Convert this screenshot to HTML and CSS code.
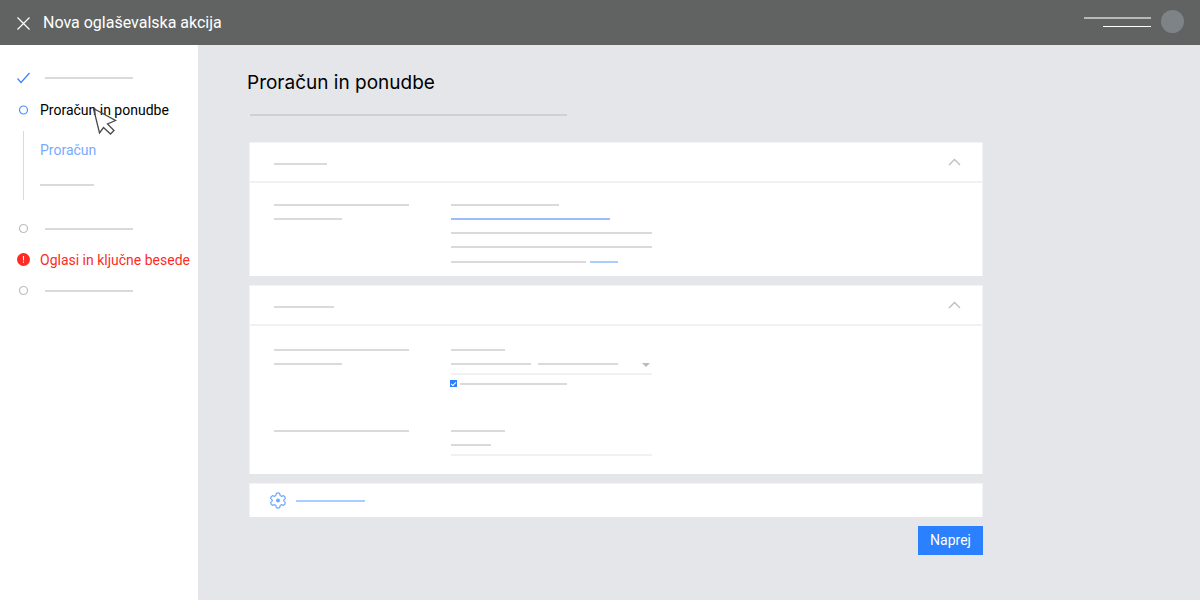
FILE: index.html
```html
<!DOCTYPE html>
<html lang="sl">
<head>
    <meta charset="UTF-8">
    <meta name="viewport" content="width=device-width, initial-scale=1.0">
    <title>Nova oglaševalska akcija</title>
    <link rel="stylesheet" href="styles.css">
</head>
<body>
    <header class="topbar">
        <button class="close-btn" type="button" aria-label="Zapri">
            <svg width="13" height="13" viewBox="0 0 13 13" fill="none" stroke="currentColor" stroke-width="1.2">
                <path d="M0.5 0.5L12.5 12.5M12.5 0.5L0.5 12.5"/>
            </svg>
        </button>
        <div class="topbar-title">Nova oglaševalska akcija</div>
        <div class="account">
            <span class="account-name"></span>
            <span class="account-mail"></span>
        </div>
        <span class="avatar"></span>
    </header>

    <div class="layout">
        <nav class="sidebar">
            <div class="step">
                <svg class="step-icon" width="13" height="13" viewBox="0 0 13 13" fill="none" stroke="#4285f4" stroke-width="1.3">
                    <path d="M0.5 6.5L4 10.5L12.5 1"/>
                </svg>
                <span class="bar step-bar"></span>
            </div>
            <div class="step">
                <svg class="step-icon" width="13" height="13" viewBox="0 0 13 13" fill="none" stroke="#4d90fe" stroke-width="1.2">
                    <circle cx="6.5" cy="6" r="4"/>
                </svg>
                <a class="step-link" href="#">Proračun in ponudbe</a>
                <svg class="cursor" width="26" height="30" viewBox="0 0 26 30" fill="none" stroke="#4a4a4a" stroke-width="1.3">
                    <path d="M1.5 1.5L7.5 26L11.5 20.5L18.5 27L22 23.5L15.5 17L23.5 13.5Z"/>
                </svg>
            </div>
            <div class="substeps">
                <a class="substep-link" href="#">Proračun</a>
                <span class="bar w-54"></span>
            </div>
            <div class="step next">
                <svg class="step-icon" width="13" height="13" viewBox="0 0 13 13" fill="none" stroke="#bdbdc2" stroke-width="1.2">
                    <circle cx="6.5" cy="6.5" r="4"/>
                </svg>
                <span class="bar step-bar"></span>
            </div>
            <div class="step next">
                <svg class="step-icon" width="13" height="13" viewBox="0 0 13 13">
                    <circle cx="6.5" cy="6.5" r="6.5" fill="#fb2c25"/>
                    <path d="M6.5 3V7.6M6.5 8.6V9.8" stroke="#fff" stroke-width="1.1"/>
                </svg>
                <a class="step-link error" href="#">Oglasi in ključne besede</a>
            </div>
            <div class="step next">
                <svg class="step-icon" width="13" height="13" viewBox="0 0 13 13" fill="none" stroke="#bdbdc2" stroke-width="1.2">
                    <circle cx="6.5" cy="6.5" r="4"/>
                </svg>
                <span class="bar step-bar"></span>
            </div>
        </nav>

        <main class="content">
            <h1>Proračun in ponudbe</h1>

            <div class="panels">
                <span class="bar intro-bar"></span>

                <section class="card">
                    <div class="card-header">
                        <span class="bar w-53"></span>
                        <button class="toggle-btn" type="button" aria-label="Strni">
                            <svg width="13" height="8" viewBox="0 0 13 8" fill="none" stroke="#bdbdbd" stroke-width="1.3">
                                <path d="M1 7L6.5 1.5L12 7"/>
                            </svg>
                        </button>
                    </div>
                    <div class="card-body goals">
                        <div class="lines">
                            <span class="bar w-135"></span>
                            <span class="bar w-68"></span>
                        </div>
                        <div class="lines">
                            <span class="bar w-108"></span>
                            <a class="bar link-strong w-159" href="#" aria-label="Cilj"></a>
                            <span class="bar w-201"></span>
                            <span class="bar w-201"></span>
                            <div class="line-end">
                                <span class="bar w-135"></span>
                                <a class="bar link w-28" href="#" aria-label="Več o tem"></a>
                            </div>
                        </div>
                    </div>
                </section>

                <section class="card">
                    <div class="card-header">
                        <span class="bar w-60"></span>
                        <button class="toggle-btn" type="button" aria-label="Strni">
                            <svg width="13" height="8" viewBox="0 0 13 8" fill="none" stroke="#bdbdbd" stroke-width="1.3">
                                <path d="M1 7L6.5 1.5L12 7"/>
                            </svg>
                        </button>
                    </div>
                    <div class="card-body budget">
                        <div class="lines">
                            <span class="bar w-135"></span>
                            <span class="bar w-68"></span>
                        </div>
                        <div>
                            <div class="lines">
                                <label class="bar w-54" for="strategy" aria-label="Strategija"></label>
                                <div class="field">
                                    <select id="strategy"><option></option></select>
                                    <div class="field-value">
                                        <span class="bar w-80"></span>
                                        <span class="bar w-80"></span>
                                        <svg class="arrow" width="8" height="4" viewBox="0 0 8 4"><path d="M0 0H8L4 4Z" fill="#b9b9c0"/></svg>
                                    </div>
                                </div>
                            </div>
                            <div class="check-row">
                                <input type="checkbox" id="limit" checked>
                                <label class="bar w-107" for="limit" aria-label="Omejitev"></label>
                            </div>
                        </div>

                        <div class="lines">
                            <span class="bar w-135"></span>
                        </div>
                        <div class="lines">
                            <label class="bar w-54" for="amount" aria-label="Znesek"></label>
                            <div class="field">
                                <input type="text" id="amount">
                                <div class="field-value">
                                    <span class="bar w-40"></span>
                                </div>
                            </div>
                        </div>
                    </div>
                </section>

                <section class="card settings">
                    <svg width="16" height="17" viewBox="0 0 16 17" fill="none" stroke="#6aa9ff" stroke-width="1.2">
                        <path d="M6.3 1.5Q8 0.3 9.7 1.5L10.2 3.6L11.4 4.3L13.6 3.7Q15.4 4.6 15.3 6.6L13.7 8.1V8.9L15.3 10.4Q15.4 12.4 13.6 13.3L11.4 12.7L10.2 13.4L9.7 15.5Q8 16.7 6.3 15.5L5.8 13.4L4.6 12.7L2.4 13.3Q0.6 12.4 0.7 10.4L2.3 8.9V8.1L0.7 6.6Q0.6 4.6 2.4 3.7L4.6 4.3L5.8 3.6Z" stroke-linejoin="round"/>
                        <circle cx="8" cy="8.5" r="2" fill="#6aa9ff" stroke="none"/>
                    </svg>
                    <a class="bar link w-69" href="#" aria-label="Nastavitve"></a>
                </section>

                <button class="next-btn" type="button">Naprej</button>
            </div>
        </main>
    </div>
</body>
</html>
```

FILE: styles.css
```css
* {
    box-sizing: border-box;
}

body {
    margin: 0;
    min-height: 100vh;
    display: flex;
    flex-direction: column;
    font-family: Roboto, "Liberation Sans", sans-serif;
    font-size: 14px;
    background: #e5e6ea;
}

button {
    font-family: inherit;
    border: none;
    padding: 0;
    background: none;
    cursor: pointer;
}

a {
    text-decoration: none;
}

svg {
    display: block;
    flex-shrink: 0;
}

/* top bar */
.topbar {
    display: flex;
    align-items: center;
    height: 45px;
    padding: 0 16px 2px 17px;
    background: #616362;
    color: #fff;
}

.close-btn {
    color: #fff;
    padding-top: 4px;
}

.topbar-title {
    flex: 1;
    margin-left: 13px;
    padding-top: 2px;
    font-size: 16px;
}

.account {
    display: flex;
    flex-direction: column;
    align-items: flex-end;
    gap: 7px;
    margin-right: 10px;
}

.account-name {
    width: 67px;
    height: 2px;
    background: #b7b9b8;
}

.account-mail {
    width: 48px;
    height: 1px;
    background: #fff;
}

.avatar {
    width: 23px;
    height: 23px;
    border-radius: 50%;
    background: #7e8387;
}

.layout {
    flex: 1;
    display: flex;
}

/* placeholder lines */
.bar {
    display: block;
    height: 2px;
    background: #dadade;
}

.bar.link {
    background: #a9cdff;
}

.bar.link-strong {
    background: #9dbcfa;
}

.w-28 { width: 28px; }
.w-40 { width: 40px; }
.w-53 { width: 53px; }
.w-54 { width: 54px; }
.w-60 { width: 60px; }
.w-68 { width: 68px; }
.w-69 { width: 69px; }
.w-80 { width: 80px; }
.w-107 { width: 107px; }
.w-108 { width: 108px; }
.w-135 { width: 135px; }
.w-159 { width: 159px; }
.w-201 { width: 201px; }

/* sidebar */
.sidebar {
    flex: 0 0 198px;
    padding-top: 17px;
    background: #fff;
}

.step {
    position: relative;
    display: flex;
    align-items: center;
    gap: 10px;
    height: 32px;
    padding-left: 17px;
    white-space: nowrap;
}

.step.next {
    height: 31px;
}

.step-bar {
    width: 88px;
    margin-left: 5px;
}

.step-link {
    color: #000;
}

.step-link.error {
    color: #fb2c25;
}

.substeps {
    display: flex;
    flex-direction: column;
    height: 69px;
    margin: 5px 0 13px 23px;
    padding: 11px 0 0 16px;
    border-left: 1px solid #dadade;
}

.substep-link {
    color: #78aaff;
    line-height: 16px;
    margin-bottom: 26px;
}

.cursor {
    position: absolute;
    left: 92px;
    top: 13px;
}

/* content */
.content {
    flex: 1;
    padding: 25px 24px 24px 49px;
}

h1 {
    margin: 0;
    font-family: Inter, sans-serif;
    font-size: 19px;
    font-weight: 400;
    line-height: 26px;
}

.panels {
    display: flex;
    flex-direction: column;
    gap: 9px;
    max-width: 736px;
    padding-left: 2px;
}

.intro-bar {
    width: 317px;
    margin: 18px 0 17px 1px;
    background: #cfd0d5;
}

.card {
    background: #fff;
    border: 1px solid #f2f3f5;
    border-bottom: none;
}

.card-header {
    display: flex;
    align-items: center;
    justify-content: space-between;
    height: 40px;
    padding: 4px 20px 0 24px;
    border-bottom: 2px solid #f1f1f2;
}

.toggle-btn {
    padding: 0 1px 5px;
}

.card-body {
    display: grid;
    grid-template-columns: 177px 201px;
    row-gap: 43px;
    padding: 0 24px;
}

.goals {
    padding-top: 21px;
    padding-bottom: 13px;
}

.budget {
    padding-top: 23px;
    padding-bottom: 18px;
}

.lines {
    display: flex;
    flex-direction: column;
    gap: 12px;
}

.line-end {
    display: flex;
    gap: 4px;
    padding-top: 1px;
}

/* control and its value share one grid cell */
.field {
    display: grid;
    height: 12px;
}

.field > * {
    grid-area: 1 / 1;
}

.field select,
.field input {
    appearance: none;
    width: 100%;
    height: 12px;
    padding: 0;
    border: none;
    border-bottom: 2px solid #f1f1f2;
    border-radius: 0;
    background: none;
    font-size: 8px;
}

.field-value {
    display: flex;
    gap: 7px;
    pointer-events: none;
}

.arrow {
    margin-left: auto;
    margin-right: 2px;
}

.check-row {
    display: flex;
    align-items: center;
    gap: 3px;
    margin: 5px 0 0 -1px;
}

.check-row input {
    appearance: none;
    width: 7px;
    height: 7px;
    margin: 0;
    background: #2a80ff;
    display: grid;
    place-items: center;
}

.check-row input:checked::before {
    content: "";
    width: 4px;
    height: 2px;
    border-left: 1px solid #fff;
    border-bottom: 1px solid #fff;
    transform: rotate(-45deg);
}

.settings {
    display: flex;
    align-items: center;
    gap: 10px;
    height: 34px;
    padding-left: 20px;
}

.next-btn {
    align-self: flex-end;
    width: 65px;
    height: 29px;
    padding-bottom: 2px;
    background: #2a80ff;
    color: #fff;
    font-size: 14px;
}
```
